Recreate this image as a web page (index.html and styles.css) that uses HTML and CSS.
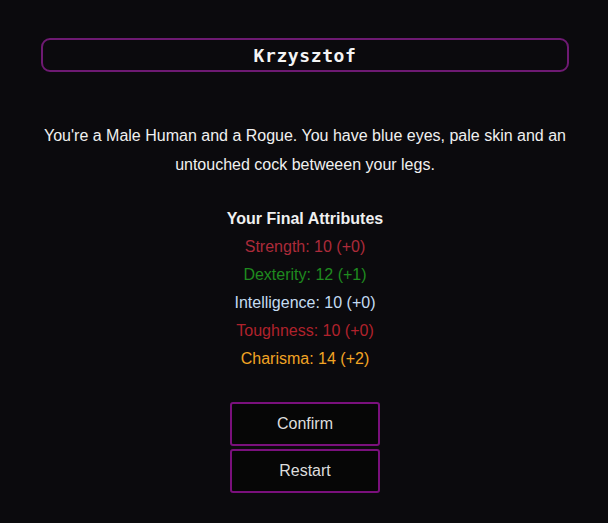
FILE: index.html
```html
<!DOCTYPE html>
<html lang="en">
<head>
    <meta charset="UTF-8">
    <meta name="viewport" content="width=device-width, initial-scale=1.0">
    <title>Character Summary</title>
    <link rel="stylesheet" href="styles.css">
</head>

<body>
    <div class="container">
        <!-- name -->
        <div class="name-box">Krzysztof</div>

        <p class="summary">You're a Male Human and a Rogue. You have blue eyes, pale skin and an untouched cock betweeen your legs.</p>

        <!-- attributes -->
        <div class="attributes">
            <h3>Your Final Attributes</h3>
            <div class="attr strength">Strength: 10 (+0)</div>
            <div class="attr dexterity">Dexterity: 12 (+1)</div>
            <div class="attr intelligence">Intelligence: 10 (+0)</div>
            <div class="attr toughness">Toughness: 10 (+0)</div>
            <div class="attr charisma">Charisma: 14 (+2)</div>
        </div>

        <div class="buttons">
            <button type="button">Confirm</button>
            <button type="button">Restart</button>
        </div>
    </div>
</body>
</html>
```
FILE: styles.css
```css
body {
    font-family: "Liberation Sans", Arial, sans-serif;
    background-color: #0b0a0d;
    color: #f0f0f0;
    margin: 0;
}

.container {
    padding: 38px 39px 0 41px;
    display: flex;
    flex-direction: column;
    align-items: center;
}

.name-box {
    align-self: stretch;
    height: 30px;
    line-height: 32px;
    border: 2px solid #6e1a72;
    border-radius: 9px;
    text-align: center;
    font-family: "Comic Sans MS", "DejaVu Sans Mono", monospace;
    font-weight: bold;
    font-size: 18px;
    letter-spacing: 0.6px;
    color: #f4f4f4;
}

.summary {
    margin: 49px 0 0;
    font-size: 16px;
    line-height: 29px;
    text-align: center;
}

.attributes {
    margin-top: 26px;
    text-align: center;
    font-size: 16px;
    line-height: 28px;
}

.attributes h3 {
    margin: 0;
    font-size: 16px;
    font-weight: bold;
}

.strength { color: #ac2b3a; }
.dexterity { color: #1f8a1f; }
.intelligence { color: #c4dcf2; }
.toughness { color: #b0222c; }
.charisma { color: #f2a424; }

.buttons {
    margin-top: 29px;
    display: flex;
    flex-direction: column;
    gap: 3px;
}

button {
    width: 150px;
    height: 44px;
    background-color: #060606;
    color: #dddddd;
    border: 2px solid #7a107c;
    border-radius: 3px;
    font-family: "Liberation Sans", Arial, sans-serif;
    font-size: 16px;
    cursor: pointer;
}
```
